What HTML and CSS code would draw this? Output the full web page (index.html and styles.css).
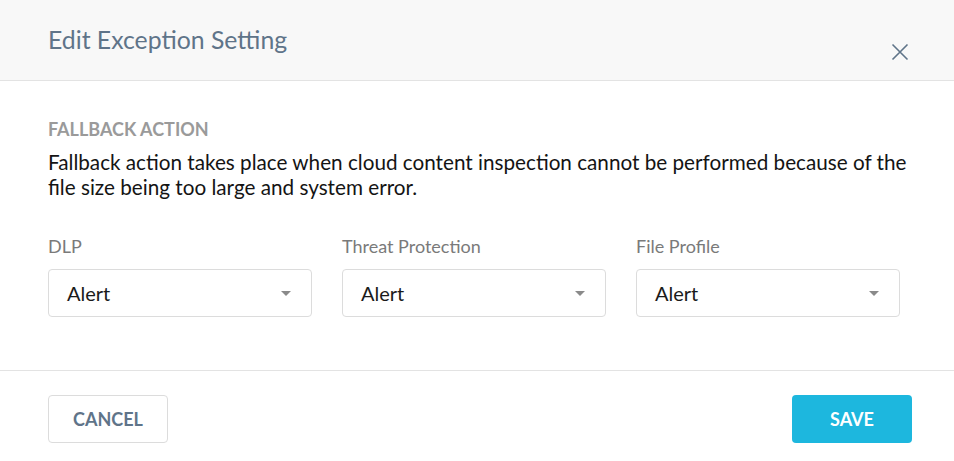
FILE: index.html
```html
<!DOCTYPE html>
<html>
<head>
<meta charset="utf-8">
<link rel="stylesheet" href="styles.css">
</head>
<body>
<div class="modal">
  <header class="modal-header">
    <h1 class="title">Edit Exception Setting</h1>
    <button class="close" aria-label="Close">
      <svg width="18" height="18" viewBox="0 0 18 18"><path d="M1.5 1.5 L16.5 16.5 M16.5 1.5 L1.5 16.5" stroke="#5f7489" stroke-width="1.6" fill="none"/></svg>
    </button>
  </header>
  <main class="modal-body">
    <div class="section-title">FALLBACK ACTION</div>
    <p class="desc">Fallback action takes place when cloud content inspection cannot be performed because of the file size being too large and system error.</p>
    <div class="fields">
      <div class="field">
        <div class="label">DLP</div>
        <div class="select"><span>Alert</span><span class="caret"></span></div>
      </div>
      <div class="field">
        <div class="label">Threat Protection</div>
        <div class="select"><span>Alert</span><span class="caret"></span></div>
      </div>
      <div class="field">
        <div class="label">File Profile</div>
        <div class="select"><span>Alert</span><span class="caret"></span></div>
      </div>
    </div>
  </main>
  <footer class="modal-footer">
    <button class="btn btn-cancel">CANCEL</button>
    <button class="btn btn-save">SAVE</button>
  </footer>
</div>
</body>
</html>
```
FILE: styles.css
```css
* { box-sizing: border-box; }
html, body { margin: 0; padding: 0; background: #fff; }
body { font-family: Lato, "Noto Sans", sans-serif; width: 954px; height: 461px; overflow: hidden; }
.modal { width: 954px; }
.modal-header {
  height: 81px;
  background: #f8f8f8;
  border-bottom: 1px solid #e3e3e3;
  display: flex;
  align-items: flex-start;
  justify-content: space-between;
  padding: 0 45px 0 48px;
}
.title {
  margin: 0;
  padding-top: 26px;
  font-size: 24.8px;
  font-weight: 400;
  color: #5f7489;
  line-height: 28px;
}
.close {
  margin-top: 43px;
  padding: 0;
  border: 0;
  background: none;
  width: 18px;
  height: 18px;
  display: block;
}
.close svg { display: block; }
.modal-body {
  padding: 37px 42px 0 48px;
  height: 290px;
  border-bottom: 1px solid #e3e3e3;
}
.section-title {
  font-size: 18px;
  font-weight: 700;
  color: #9a9a9a;
  line-height: 22px;
}
.desc {
  margin: 10px 0 0;
  font-size: 20.7px;
  line-height: 25px;
  color: #141414;
}
.fields {
  display: grid;
  grid-template-columns: 264px 264px 264px;
  column-gap: 30px;
  margin-top: 35px;
}
.label {
  font-size: 18px;
  color: #7a7a7a;
  line-height: 22px;
}
.select {
  margin-top: 12px;
  height: 48px;
  border: 1px solid #dcdcdc;
  border-radius: 4px;
  display: flex;
  align-items: center;
  justify-content: space-between;
  padding: 0 20px 0 18px;
  font-size: 20px;
  color: #1a1a1a;
}
.caret {
  width: 0; height: 0;
  border-left: 5px solid transparent;
  border-right: 5px solid transparent;
  border-top: 5px solid #8a8a8a;
}
.modal-footer {
  display: flex;
  justify-content: space-between;
  padding: 24px 42px 0 48px;
}
.btn {
  width: 120px;
  height: 48px;
  border-radius: 4px;
  font-family: Lato, "Noto Sans", sans-serif;
  font-size: 18px;
  font-weight: 700;
  cursor: pointer;
}
.btn-cancel {
  background: #fff;
  border: 1px solid #dcdcdc;
  color: #5f7489;
}
.btn-save {
  background: #1db7de;
  border: 0;
  color: #fff;
}
```
